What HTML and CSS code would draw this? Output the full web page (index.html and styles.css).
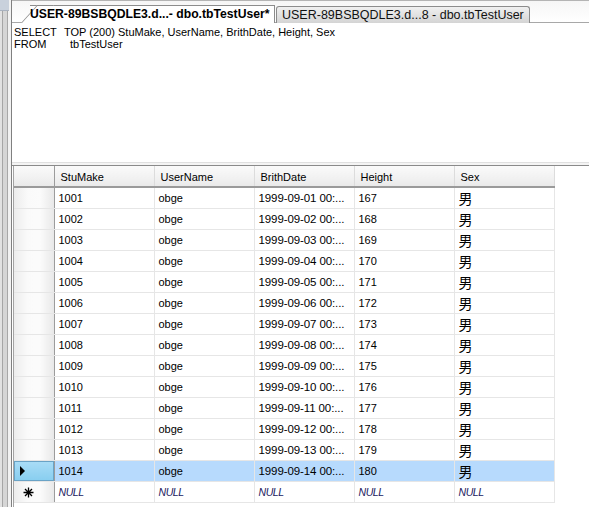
FILE: index.html
```html
<!DOCTYPE html>
<html lang="en">
<head>
  <meta charset="UTF-8" />
  <title>dbo.tbTestUser</title>
  <link rel="stylesheet" href="styles.css">
</head>
<body>

  <div class="side">
    <div class="side-top"></div>
  </div>

  <div class="main">
    <div class="tabstrip">
      <div class="tab tab-active">USER-89BSBQDLE3.d...- dbo.tbTestUser*</div>
      <div class="tab tab-other">USER-89BSBQDLE3.d...8 - dbo.tbTestUser</div>
    </div>

    <div class="editor">
      <div class="sql-line"><span class="kw">SELECT</span><span>TOP (200) StuMake, UserName, BrithDate, Height, Sex</span></div>
      <div class="sql-line"><span class="kw">FROM</span><span class="from">tbTestUser</span></div>
    </div>

    <div class="splitter"></div>

    <div class="results">
      <table class="grid">
        <colgroup>
          <col class="c-rh"><col class="c"><col class="c"><col class="c"><col class="c"><col class="c">
        </colgroup>
        <thead>
          <tr>
            <th class="rh"></th>
            <th>StuMake</th>
            <th>UserName</th>
            <th>BrithDate</th>
            <th>Height</th>
            <th>Sex</th>
          </tr>
        </thead>
        <tbody id="rows"></tbody>
      </table>
    </div>
  </div>

  <script>
    var body = document.getElementById('rows');
    var html = '';
    for (var i = 1; i <= 14; i++) {
      var day = (i < 10 ? '0' : '') + i;
      var sel = i === 14;
      html += '<tr' + (sel ? ' class="selected"' : '') + '>' +
        '<td class="rh">' + (sel ? '<span class="arrow"></span>' : '') + '</td>' +
        '<td>' + (1000 + i) + '</td>' +
        '<td>obge</td>' +
        '<td class="date">1999-09-' + day + ' 00:...</td>' +
        '<td>' + (166 + i) + '</td>' +
        '<td class="sex">男</td>' +
        '</tr>';
    }
    html += '<tr class="new-row"><td class="rh">' +
      '<svg width="11" height="11" viewBox="0 0 11 11"><path d="M5.5 0.5v10M0.5 5.5h10M2 2l7 7M9 2l-7 7" stroke="#000" stroke-width="1.3"/></svg>' +
      '</td><td>NULL</td><td>NULL</td><td>NULL</td><td>NULL</td><td>NULL</td></tr>';
    body.innerHTML = html;
  </script>

</body>
</html>
```

FILE: styles.css
```css
html, body {
  margin: 0;
  height: 100%;
}
body {
  display: flex;
  width: 589px;
  height: 507px;
  overflow: hidden;
  background: #ffffff;
  font-family: "Liberation Sans", Arial, sans-serif;
  font-size: 11px;
  color: #000;
}
.side {
  width: 12px;
  flex: none;
  background: linear-gradient(to right, #e2e2e2 0 2px, #a6a6a6 2px 3px, #d6d6d6 3px 7px, #a8a8a8 7px 8px, #f2f2f2 8px 11px, #808080 11px 12px);
}
.side-top {
  height: 10px;
  width: 9px;
  background: #c9d1dc;
  border-bottom: 1px solid #a9b2bf;
}
.main {
  flex: 1;
  display: flex;
  flex-direction: column;
}
.tabstrip {
  height: 23px;
  flex: none;
  display: flex;
  align-items: flex-end;
  border-top: 1px solid #b4b4b4;
  border-bottom: 1px solid #a8a8a8;
  background: linear-gradient(#f6f6f6, #ffffff);
  box-sizing: border-box;
}
.tab {
  height: 17px;
  line-height: 16px;
  box-sizing: border-box;
  white-space: nowrap;
  margin-bottom: -1px;
  font-size: 12.5px;
}
.tab-active {
  position: relative;
  margin-left: 18px;
  width: 245px;
  height: 18px;
  background: #ffffff;
  border-top: 1px solid #8c8c8c;
  border-right: 1px solid #8c8c8c;
  font-weight: bold;
  font-size: 12.2px;
  z-index: 1;
}
.tab-active::before {
  content: '';
  position: absolute;
  left: -9px;
  top: -1px;
  bottom: 0;
  width: 16px;
  background: #ffffff;
  border-left: 1px solid #8c8c8c;
  border-top: 1px solid #8c8c8c;
  transform: skewX(-42deg);
  transform-origin: bottom left;
  z-index: -1;
}
.tab-other {
  margin-left: 1px;
  width: 254px;
  padding-left: 5px;
  color: #111;
  background: linear-gradient(#f0f0f0, #d4d4d4);
  border: 1px solid #8c8c8c;
  border-bottom: none;
  border-radius: 3px 3px 0 0;
}
.editor {
  height: 138px;
  flex: none;
  padding: 3px 0 0 2px;
  box-sizing: border-box;
  line-height: 12px;
}
.sql-line {
  display: flex;
  white-space: nowrap;
}
.kw {
  width: 50px;
  flex: none;
}
.from {
  padding-left: 6px;
}
.splitter {
  height: 4px;
  flex: none;
  margin-top: 1px;
  border-top: 1px solid #e0e0e0;
  border-bottom: 1px solid #8a8a8a;
  background: #f4f4f4;
  box-sizing: border-box;
}
.results {
  flex: 1;
  margin-left: 1px;
  border-left: 1px solid #a4a4a4;
}
.grid {
  border-collapse: collapse;
  table-layout: fixed;
  width: 540px;
}
.c-rh {
  width: 40px;
}
.c {
  width: 100px;
}
.grid th {
  height: 19px;
  padding: 1px 0 0 6px;
  text-align: left;
  font-weight: normal;
  background: linear-gradient(#fafafa, #f1f1f1 60%, #e9e9e9);
  border-right: 1px solid #dcdcdc;
  border-bottom: 2px solid #9a9a9a;
  white-space: nowrap;
}
.grid th.rh {
  border-right: 1px solid #9c9c9c;
}
.grid td {
  height: 20px;
  padding: 0 4px;
  border-right: 1px solid #e6e6e6;
  border-bottom: 1px solid #e6e6e6;
  white-space: nowrap;
  overflow: hidden;
}
.grid td.date {
  font-size: 11.5px;
  letter-spacing: -0.1px;
}
.grid td.rh {
  padding: 0;
  border-right: 1px solid #9c9c9c;
  background: linear-gradient(to right, #ececec, #fafafa 35%, #fbfbfb 65%, #e8e8e8);
}
.grid td.sex {
  font-family: "Noto Sans CJK SC", sans-serif;
  font-size: 14px;
}
.selected td {
  background: #b7dafd;
}
.selected td.rh {
  position: relative;
  background: linear-gradient(#a9dcf6, #86cdef);
  box-shadow: inset 0 0 0 1px #6aa3c6;
}
.arrow {
  position: absolute;
  left: 6px;
  top: 5px;
  width: 0;
  height: 0;
  border-top: 5px solid transparent;
  border-bottom: 5px solid transparent;
  border-left: 5px solid #000;
}
.new-row td {
  font-style: italic;
  font-size: 10.5px;
  color: #1a2060;
  letter-spacing: -0.4px;
}
.new-row td.rh svg {
  display: block;
  margin-left: 9px;
}
```
